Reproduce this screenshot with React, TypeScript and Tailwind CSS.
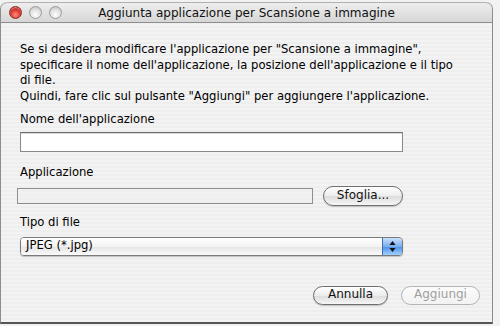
export default function App() {
  return (
    <div className="w-[500px] h-[326px] bg-[#f2f2f2] overflow-hidden font-['DejaVu_Sans',sans-serif] text-black">
      <div className="mt-[2px] w-[493px] h-[322px] rounded-t-[7px] border-l border-r border-[#8c8c8c] border-b-2 border-b-[#555] flex flex-col overflow-hidden bg-[repeating-linear-gradient(180deg,#eeeeee_0px,#eeeeee_2px,#f3f3f3_2px,#f3f3f3_4px)]">
        {/* title bar */}
        <div className="relative h-[21px] shrink-0 flex items-center border-t border-[#b0b0b0] rounded-t-[7px] bg-[linear-gradient(180deg,#eeeeee,#d6d6d6)] border-b border-b-[#8e8e8e]">
          <div className="flex items-center gap-[7px] pl-[8px]">
            <span className="w-[13px] h-[13px] rounded-full border border-[#8a2a24] bg-[radial-gradient(circle_at_50%_70%,#ff8c7c,#d7322b_55%,#9a1612)] shadow-[inset_0_1px_1px_rgba(255,255,255,0.5)]" />
            <span className="w-[13px] h-[13px] rounded-full border border-[#9a9a9a] bg-[radial-gradient(circle_at_50%_70%,#ffffff,#dcdcdc_60%,#b5b5b5)]" />
            <span className="w-[13px] h-[13px] rounded-full border border-[#9a9a9a] bg-[radial-gradient(circle_at_50%_70%,#ffffff,#dcdcdc_60%,#b5b5b5)]" />
          </div>
          <div className="absolute inset-0 flex items-center justify-center text-[12px] text-[#111]">
            Aggiunta applicazione per Scansione a immagine
          </div>
        </div>

        {/* content */}
        <div className="flex flex-col px-[19px] pt-[19px] text-[11.6px] leading-[15.5px]">
          <p className="whitespace-nowrap">
            Se si desidera modificare l'applicazione per "Scansione a immagine",
            <br />
            specificare il nome dell'applicazione, la posizione dell'applicazione e il tipo
            <br />
            di file.
            <br />
            Quindi, fare clic sul pulsante "Aggiungi" per aggiungere l'applicazione.
          </p>

          <div className="mt-[8px]">Nome dell'applicazione</div>
          <div className="mt-[4px] w-[383px] h-[20px] bg-white border border-[#8a8a8a] border-t-[#6a6a6a] shadow-[inset_0_1px_1px_rgba(0,0,0,0.15)]" />

          <div className="mt-[13px]">Applicazione</div>
          <div className="mt-[6px] flex items-center">
            <div className="-ml-[3px] w-[296px] h-[16px] border border-[#8e8e8e] bg-[#f0f0f0]/60" />
            <button className="ml-[10px] w-[80px] h-[20px] rounded-full border border-[#707070] bg-[linear-gradient(180deg,#ffffff,#ececec_50%,#dcdcdc_51%,#f6f6f6)] text-[12px] text-[#111] flex items-center justify-center shadow-[0_1px_1px_rgba(0,0,0,0.2)]">
              Sfoglia...
            </button>
          </div>

          <div className="mt-[9px]">Tipo di file</div>
          <div className="mt-[6px] w-[383px] h-[19px] flex rounded-[4px] border border-[#7a7a7a] overflow-hidden shadow-[0_1px_1px_rgba(0,0,0,0.2)]">
            <div className="flex-1 flex items-center pl-[5px] bg-[linear-gradient(180deg,#ffffff,#f2f2f2_50%,#e4e4e4_51%,#fafafa)]">
              JPEG (*.jpg)
            </div>
            <div className="w-[20px] flex flex-col items-center justify-center border-l border-[#3b6db4] bg-[linear-gradient(180deg,#c9e0fb,#79aef0_50%,#4d8fe6_51%,#9fd0ff)]">
              <svg width="7" height="13" viewBox="0 0 7 13">
                <path d="M3.5 1 L6.5 5 L0.5 5 Z" fill="#111" />
                <path d="M3.5 12 L6.5 8 L0.5 8 Z" fill="#111" />
              </svg>
            </div>
          </div>

          <div className="mt-[30px] -mr-[7px] flex justify-end gap-[13px]">
            <button className="w-[75px] h-[19px] rounded-full border border-[#6e6e6e] bg-[linear-gradient(180deg,#ffffff,#ececec_50%,#dcdcdc_51%,#f6f6f6)] text-[12px] text-[#111] flex items-center justify-center shadow-[0_1px_1px_rgba(0,0,0,0.2)]">
              Annulla
            </button>
            <button className="w-[79px] h-[19px] rounded-full border border-[#b4b4b4] bg-[linear-gradient(180deg,#fbfbfb,#f2f2f2)] text-[12px] text-[#a0a0a0] flex items-center justify-center">
              Aggiungi
            </button>
          </div>
        </div>
      </div>
    </div>
  );
}
